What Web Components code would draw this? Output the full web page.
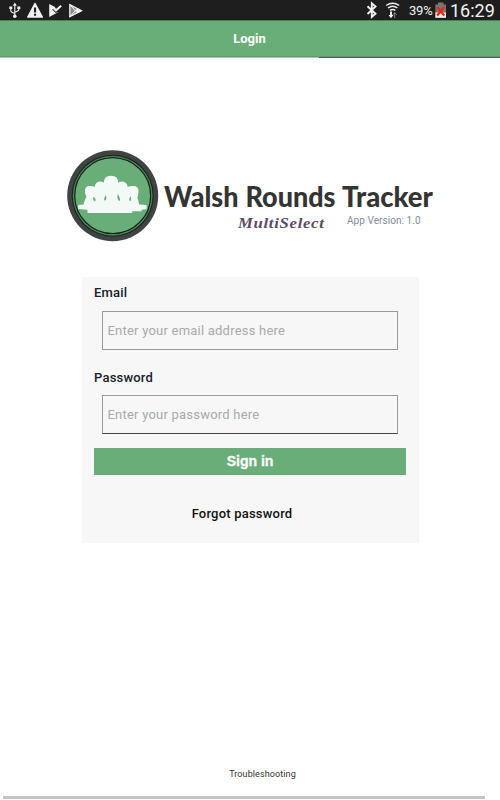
<!DOCTYPE html>
<html lang="en"><head><meta charset="utf-8"><title>Login</title>
<style>html,body{margin:0;height:100%;background:#fff;font-family:Roboto,"Liberation Sans",sans-serif}</style></head>
<body><login-screen></login-screen>
<script>
const define=(name,html)=>customElements.define(name,class extends HTMLElement{
  constructor(){super();const t=document.createElement('template');t.innerHTML=html;
    this.attachShadow({mode:'open'}).append(t.content.cloneNode(true));}
});

define('status-bar',`<style>
:host{display:flex;height:20px;background:#1e1e1e;color:#f2f2f2;overflow:hidden;justify-content:space-between}
svg{display:block;flex:none}.right{display:flex}
.pct{width:26px;font-size:13px;line-height:22px;white-space:nowrap;letter-spacing:-.2px}
.time{width:50px;font-size:18px;line-height:21px;white-space:nowrap;letter-spacing:0}
</style>
<svg width="90" height="20" viewBox="0 0 90 20" fill="#f0f0f0">
 <g fill="none" stroke="#e6e6e6" stroke-width="1.2"><path d="M14.8 4v12M10.8 7.5v3.2q0 1.5 4 2.8M18.8 7.5v2q0 1.5-4 2.8"/></g>
 <path d="M14.8 2.5l2 3.2h-4zM9.3 6.5h3v2.6h-3zM17.3 6.5h3v2.6h-3z"/><circle cx="14.8" cy="16.3" r="1.8"/>
 <path d="M35 3.5L42.3 17H27.8z" stroke="#f0f0f0" stroke-width="1.5" stroke-linejoin="round"/><path d="M34 7.5h2.1v5H34zM34 13.8h2.1v2H34z" fill="#1e1e1e"/>
 <path d="M49.2 4L55.5 7.2 53 9l3.2 3.2 2.300-.2L49.200 17z"/><path d="M52.300 9.500l3.700 3.300L61.500 7.500" stroke="#1e1e1e" stroke-width=".8" fill="none"/><path d="M53.500 7.600l2.600 2.700 5-4.500" stroke="#f0f0f0" stroke-width="2" fill="none"/>
 <path d="M69.800 4.700L81.500 10.700 69.800 16.700z" fill="#888" stroke="#f0f0f0" stroke-width="1.300"/><path d="M69.700 4.500l7.500 8.300M69.700 16.800l7.500-8.300" stroke="#f0f0f0"/><path d="M75.600 10.700l2.300-2.500 4 2.500-4 2.500z"/>
</svg>
<div class="right">
<svg width="43" height="20" viewBox="366 0 43 20">
 <path d="M367.500 6.200l8 7.500-3.700 3.300V3.300l3.700 3.200-8 7.500" fill="none" stroke="#f0f0f0" stroke-width="1.900"/>
 <g fill="none" stroke="#eee" stroke-width="1.500"><path d="M386.200 5.500q6.500-4.600 13 0M388 8q4.700-3.400 9.400 0M390 10.300q2.700-1.800 5.400 0"/></g>
 <path d="M394.700 18v-5.500M392.800 14.800l1.900-2.200 1.900 2.200" stroke="#888" fill="none"/><path d="M391 11.500v4.800" stroke="#fff" stroke-width="1.800"/><path d="M388.600 15h4.800l-2.400 3.300z" fill="#fff"/>
</svg><span class="pct">39%</span>
<svg width="15" height="20" viewBox="435 0 15 20"><path d="M438 2.500h5.500v2h2.500v13.300h-10.600V4.500h2.600z" fill="#777"/><path d="M435.400 12.500H446v5.300h-10.600z" fill="#eee"/><path d="M437.200 7l7 8.500M444.200 7l-7 8.500" stroke="#ed2415" stroke-width="2.300"/></svg>
<span class="time">16:29</span></div>`);

define('app-header',`<style>
:host{display:flex;flex-direction:column;height:37px;background:#69ad79;color:#fff;border-top:1px solid #4d8059;box-sizing:border-box}
b{flex:1;text-align:center;font-size:13px;line-height:35px;padding-right:1px}
i{display:block;height:2px;background:linear-gradient(#5e9a6c 50%,#a5ccae 50%)}
i::after{content:"";display:block;margin-left:319px;height:2px;background:linear-gradient(#5e9a6c 50%,#555b57 50%)}
</style><b><slot></slot></b><i></i>`);

define('app-brand',`<style>:host{display:block;padding:92px 50px 0;height:94px}svg{display:block;overflow:visible}</style>
<svg width="400" height="94" viewBox="50 149 400 94">
 <circle cx="112.700" cy="195.700" r="45.500" fill="#3f4341"/><circle cx="112.700" cy="195.700" r="41" fill="#202421"/>
 <circle cx="112.700" cy="195.700" r="39.500" fill="#69ad79" stroke="#3f7950" stroke-width=".8"/><circle cx="112.700" cy="195.700" r="38" fill="#69ad79" stroke="#15251a" stroke-width="1.300"/>
 <path fill="#f3f9f5" d="M85 190.500q.3-4.300 4-4.500 3.500-.4 5.800 1 .2-5 5.200-5.500 2.500 0 4 1.300-.5-6.800 7-7 7.500.2 7.200 7 1.800-1.500 4-1.300 5 .5 5.500 5.500 2-1.200 5.500-1 5.300-.2 5.300 5 0 4-1.200 6.500l1 3 .9 4 7.400.5v4.300l-5 .4v1.600h-9.400v1.600H87.500v-3.200l-9.300-.7v-4l5.300-.6 1.500-5 1.500-2.600q-1.800-2.500-1.500-6.300z"/>
 <g fill="#69ad79"><path d="M93 196.800q3 1.500 2.600 4-1.200 1-2.200-.8zM105.800 195q1.500 4.700-1 5.800-1.700-1.500 1-5.800zM117.700 194q3.300 5 2 7-3.200-1-2-7zM130.600 196.300q1.300 4-.4 4.700-2.300-1 .4-4.700z"/></g>
 <g fill="#343434" font-family="Lato,Open Sans,sans-serif" font-size="27.500" font-weight="900"><text x="164" y="207.300" textLength="74.500" lengthAdjust="spacingAndGlyphs">Walsh</text>
 <text x="245.500" y="207.300" textLength="90" lengthAdjust="spacingAndGlyphs">Rounds</text><text x="342" y="207.300" textLength="91" lengthAdjust="spacingAndGlyphs">Tracker</text></g>
 <g transform="translate(238 228) scale(1.080 1)"><text textLength="79.500" fill="#5c4b66" font-family="Liberation Serif,serif" font-size="15.500" font-weight="700" font-style="italic">MultiSelect</text></g>
 <text x="347" y="223.500" textLength="73.500" fill="#808b9a" font-family="Roboto,sans-serif" font-size="10">App Version: 1.0</text>
</svg>`);

define('form-field',`<style>
:host{display:block;height:84px;color:#17202b}
label{display:block;font-size:13px;font-weight:500;line-height:17px;height:26px;letter-spacing:.2px}
.box{margin:0 8px;height:39px;box-sizing:border-box;border:1px solid #999;border-bottom-color:var(--edge,#999);color:#aaa;font-size:13px;line-height:37px;padding-left:4.500px;letter-spacing:.22px}
:host(:first-of-type) label{line-height:16px}
</style><label><slot name="label"></slot></label><div class="box"><slot></slot></div>`);

define('sign-in-button',`<style>:host{display:block;height:27px;background:#69ad79;color:#fff;text-align:center;font:700 14px/26px "Liberation Sans",sans-serif;-webkit-text-stroke:.3px #fff}</style><slot></slot>`);

define('login-card',`<style>
:host{display:flex;flex-direction:column;box-sizing:border-box;width:337px;height:265.500px;margin:34px 0 0 82px;padding:8px 13px 0 12px;background:#f7f7f7}
form-field{flex:none}.last{--edge:#444;height:79px}
a{display:block;text-align:center;font-size:13px;font-weight:500;line-height:16px;margin-top:31px;padding-right:16px;color:#111;letter-spacing:.2px}
</style>
<form-field><span slot="label">Email</span>Enter your email address here</form-field>
<form-field class="last"><span slot="label">Password</span>Enter your password here</form-field>
<sign-in-button>Sign in</sign-in-button><a>Forgot password</a>`);

define('page-footer',`<style>:host{display:block;margin-top:auto}span{display:block;text-align:center;padding-left:25px;font-size:9px;line-height:12px;color:#333;letter-spacing:.1px}
i{display:block;height:3px;margin:16px 15px 1px 3px;background:#c3c3c3}</style><span><slot></slot></span><i></i>`);

define('login-screen',`<style>:host{display:flex;flex-direction:column;width:500px;height:800px;overflow:hidden;background:#fff}</style>
<status-bar></status-bar><app-header>Login</app-header><app-brand></app-brand><login-card></login-card><page-footer>Troubleshooting</page-footer>`);
</script></body></html>
